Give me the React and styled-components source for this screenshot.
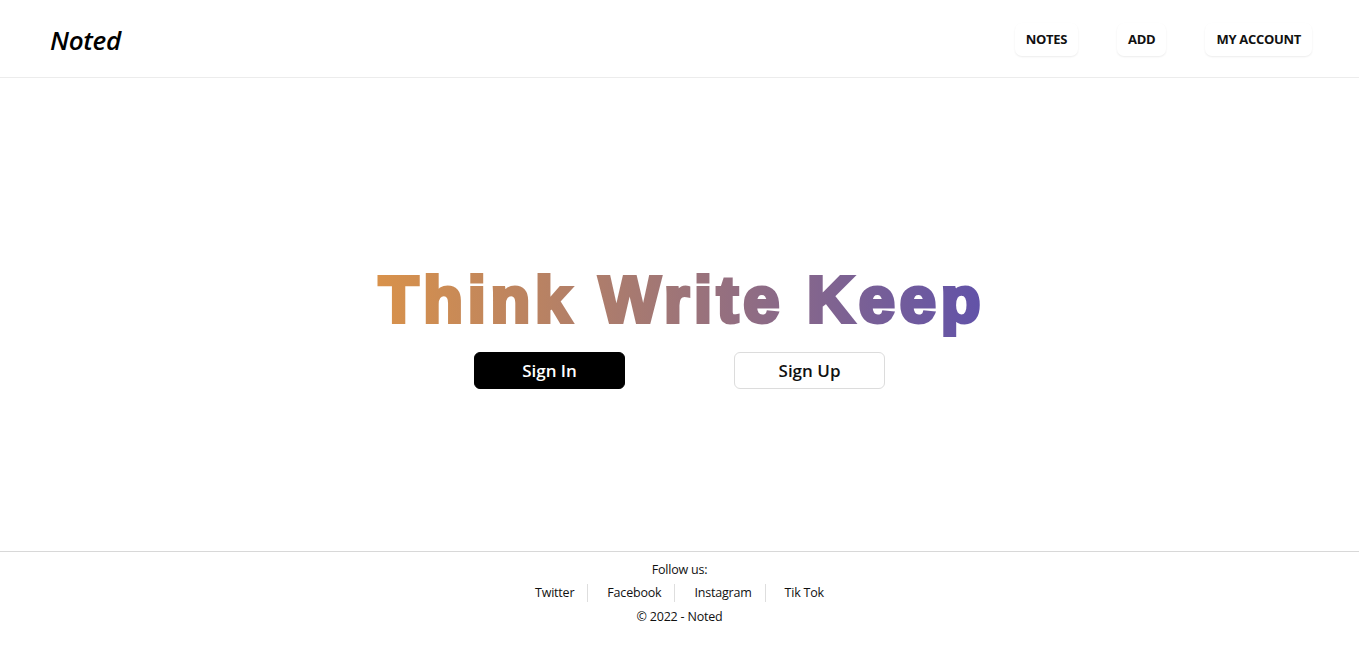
import React from 'react';
import styled, { createGlobalStyle } from 'styled-components';

const GlobalStyle = createGlobalStyle`
  html, body {
    margin: 0;
    padding: 0;
    background: #fff;
    font-family: "Open Sans", "Noto Sans", sans-serif;
    color: #000;
  }
`;

const Page = styled.div`
  display: flex;
  flex-direction: column;
  min-height: 654px;
`;

const Header = styled.header`
  height: 78px;
  border-bottom: 1px solid #ececec;
  display: flex;
  align-items: center;
  justify-content: space-between;
  padding: 0 47px 0 50px;
  box-sizing: border-box;
`;

const Logo = styled.div`
  font-size: 26px;
  font-style: italic;
  font-weight: 600;
  letter-spacing: -0.3px;
  margin-top: 2px;
`;

const Nav = styled.nav`
  display: flex;
  gap: 39px;
  margin-top: 2px;
`;

const NavButton = styled.button`
  border: none;
  background: #fff;
  font-family: inherit;
  font-size: 13px;
  font-weight: 700;
  letter-spacing: -0.3px;
  color: #111;
  padding: 7px 11px 8px;
  border-radius: 7px;
  box-shadow: 0 1px 2px rgba(0, 0, 0, 0.08);
  cursor: pointer;
`;

const Main = styled.main`
  height: 473px;
  display: flex;
  flex-direction: column;
  align-items: center;
  justify-content: center;
  padding-top: 24px;
  box-sizing: border-box;
`;

/* gradient sits behind a white layer with black heavy text; screen blend lets the gradient show through the letters */
const Headline = styled.h1`
  margin: 0;
  display: inline-block;
  isolation: isolate;
  background: linear-gradient(90deg, #d9924a 0%, #a47873 45%, #6152a9 100%);
`;

const HeadlineText = styled.span`
  display: block;
  background: #fff;
  color: #000;
  mix-blend-mode: screen;
  font-family: "Liberation Sans", Arial, sans-serif;
  font-weight: 700;
  font-size: 65px;
  line-height: 72px;
  letter-spacing: 4.8px;
  padding: 0 0 8px 5px;
  -webkit-text-stroke: 4px #000;
`;

const Actions = styled.div`
  display: flex;
  gap: 109px;
  margin-top: 8px;
`;

const ActionButton = styled.button`
  width: 151px;
  height: 37px;
  border-radius: 6px;
  font-family: inherit;
  font-size: 17px;
  font-weight: 600;
  cursor: pointer;
  background: ${p => (p.$primary ? '#000' : '#fff')};
  color: ${p => (p.$primary ? '#fff' : '#111')};
  border: 1px solid ${p => (p.$primary ? '#000' : '#dcdcdc')};
`;

const Footer = styled.footer`
  border-top: 1px solid #d8d8d8;
  display: flex;
  flex-direction: column;
  align-items: center;
  padding-top: 9px;
  font-size: 12.5px;
  letter-spacing: -0.2px;
  color: #111;
`;

const FollowLabel = styled.div`
  line-height: 18px;
`;

const Links = styled.div`
  display: flex;
  align-items: center;
  margin-top: 5px;
`;

const SocialLink = styled.a`
  color: #111;
  text-decoration: none;
  padding: 0 13px 0 19px;
  line-height: 18px;
  border-left: 1px solid #dedede;

  &:first-child {
    padding-left: 0;
    border-left: none;
  }
  &:last-child {
    padding-right: 0;
  }
`;

const Copyright = styled.div`
  margin-top: 6px;
  line-height: 18px;
`;

const socials = ['Twitter', 'Facebook', 'Instagram', 'Tik Tok'];

export default function App() {
  return (
    <Page>
      <GlobalStyle />
      <Header>
        <Logo>Noted</Logo>
        <Nav>
          <NavButton>NOTES</NavButton>
          <NavButton>ADD</NavButton>
          <NavButton>MY ACCOUNT</NavButton>
        </Nav>
      </Header>
      <Main>
        <Headline>
          <HeadlineText>Think Write Keep</HeadlineText>
        </Headline>
        <Actions>
          <ActionButton $primary>Sign In</ActionButton>
          <ActionButton>Sign Up</ActionButton>
        </Actions>
      </Main>
      <Footer>
        <FollowLabel>Follow us:</FollowLabel>
        <Links>
          {socials.map(s => (
            <SocialLink key={s} href="#">
              {s}
            </SocialLink>
          ))}
        </Links>
        <Copyright>© 2022 - Noted</Copyright>
      </Footer>
    </Page>
  );
}
